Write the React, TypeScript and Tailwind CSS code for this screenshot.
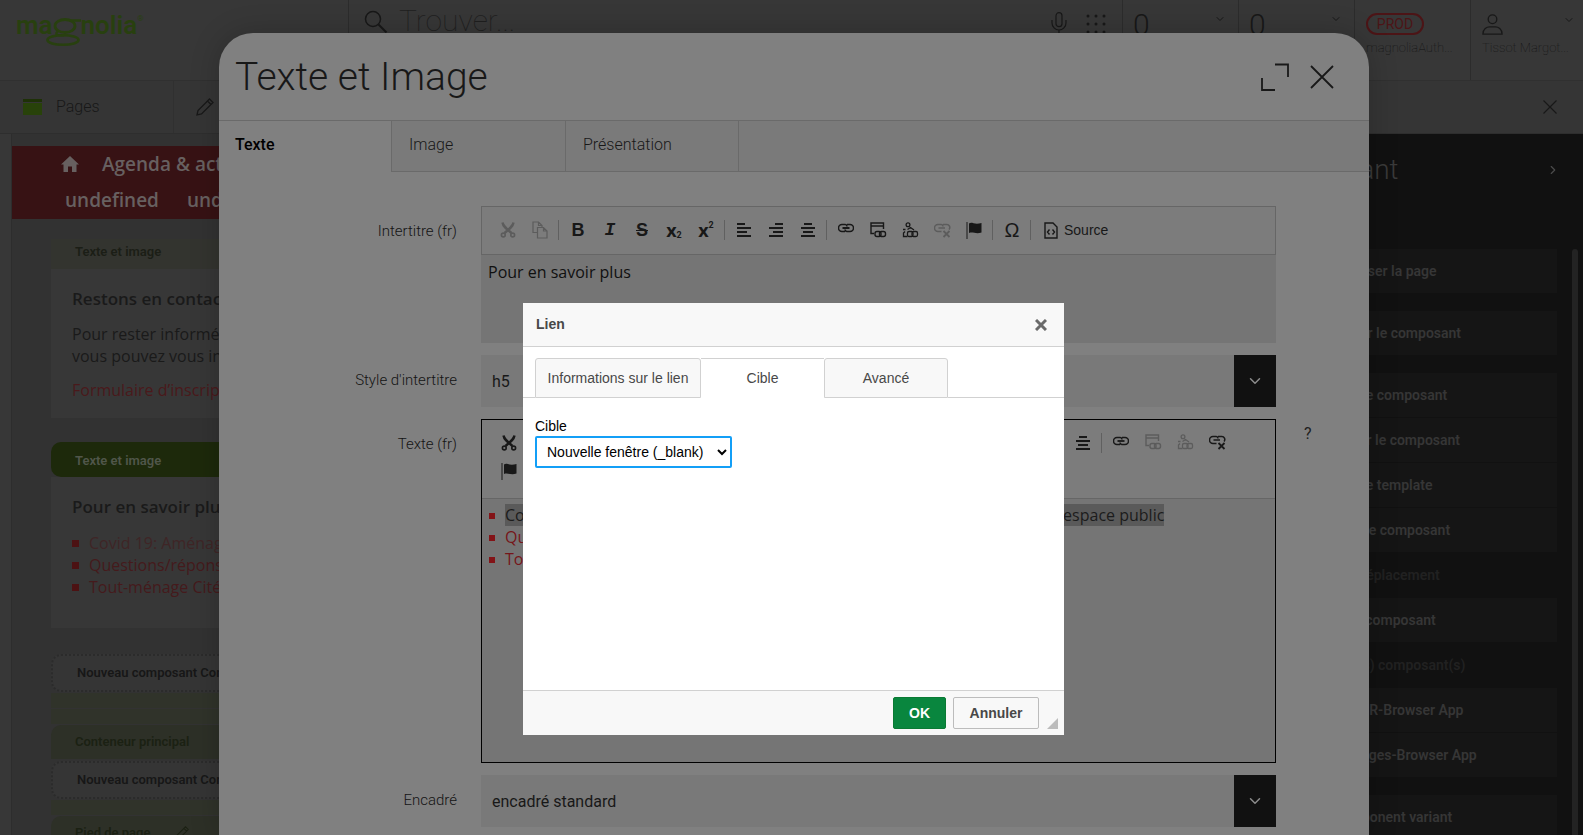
import { useState } from 'react';
import type { ReactNode } from 'react';
import {
  FiChevronDown,
  FiChevronRight,
  FiClipboard,
  FiCornerUpLeft,
  FiCornerUpRight,
  FiList,
} from 'react-icons/fi';

interface Action {
  label: string;
  disabled?: boolean;
}

interface IconProps {
  className?: string;
}

const actionGroups: Action[][] = [
  [{ label: 'Prévisualiser la page' }],
  [{ label: 'Configurer le composant' }],
  [
    { label: 'Modifier le composant' },
    { label: 'Supprimer le composant' },
    { label: 'Modifier le template' },
    { label: 'Déplacer le composant' },
    { label: 'Annuler déplacement', disabled: true },
    { label: 'Copier le composant' },
    { label: 'Coller (les) composant(s)', disabled: true },
    { label: 'Lancer JCR-Browser App' },
    { label: 'Lancer Pages-Browser App' },
  ],
  [{ label: 'Add component variant' }],
];

const pageLinks = [
  'Covid 19: Aménagements temporaires et adaptations de nos usages dans l’espace public',
  'Questions/réponses Covid-19',
  'Tout-ménage Cité de Neuchâtel',
];

function CutIcon({ className }: IconProps) {
  return (
    <svg viewBox="0 0 16 16" className={`h-4 w-4 ${className ?? ''}`} fill="none" stroke="currentColor">
      <path d="M2.5 0.5 C3 4 6 6.500 11.500 11 M13.500 0.500 C13 4 10 6.500 4.500 11" strokeWidth="2.400" />
      <circle cx="3.300" cy="13" r="1.900" strokeWidth="1.600" />
      <circle cx="12.700" cy="13" r="1.900" strokeWidth="1.600" />
    </svg>
  );
}

function CopyIcon({ className }: IconProps) {
  return (
    <svg viewBox="0 0 16 18" className={`h-[18px] w-4 ${className ?? ''}`} fill="none" stroke="currentColor" strokeWidth="1.2">
      <path d="M5 11.500 H1 V1 H6.500 L10 4.500 V6 M6.500 1 V4.500 H10" />
      <path d="M5.500 6.500 H11.500 L15 10 V17 H5.500 Z M11.500 6.500 V10 H15" />
    </svg>
  );
}

function AlignIcon({ kind }: { kind: 'left' | 'right' | 'center' }) {
  const rows = [8, 14, 10, 14];
  return (
    <svg viewBox="0 0 14 14" className="h-[14px] w-[14px]" fill="currentColor">
      {rows.map((w, i) => {
        const x = kind === 'left' ? 0 : kind === 'right' ? 14 - w : (14 - w) / 2;
        return <rect key={i} x={x} y={i * 4} width={w} height="2" />;
      })}
    </svg>
  );
}

function LinkIcon() {
  return (
    <svg viewBox="0 0 16 10" className="mb-1 h-[10px] w-4" fill="none" stroke="currentColor" strokeWidth="1.5">
      <path d="M7 8.500 H4 A3.200 3.200 0 0 1 4 1.500 H7.200 A2 2 0 0 1 9 3.500" />
      <path d="M9 1.500 H12 A3.200 3.200 0 0 1 12 8.500 H8.800 A2 2 0 0 1 7 6.500" />
      <path d="M4.500 5 H11.500" strokeWidth="1.800" />
    </svg>
  );
}

function PageLinkIcon({ className }: IconProps) {
  return (
    <svg viewBox="0 0 17 17" className={`h-[17px] w-[17px] ${className ?? ''}`} fill="none" stroke="currentColor" strokeWidth="1.400">
      <path d="M4 11.500 H1 V1 H13.500 V7 M1 4 H13.500" />
      <rect x="5" y="9.500" width="6" height="5" rx="2" />
      <rect x="9.500" y="9.500" width="6" height="5" rx="2" />
    </svg>
  );
}

function AssetLinkIcon({ className }: IconProps) {
  return (
    <svg viewBox="0 0 17 17" className={`h-[17px] w-[17px] ${className ?? ''}`} fill="none" stroke="currentColor" strokeWidth="1.300">
      <circle cx="6" cy="2.800" r="1.900" />
      <path d="M5.500 14.500 H1.500 V11 L3 9.500 M1 7.500 H3.500 M5.500 7.500 L8.500 5.500 L12 8" />
      <rect x="5.500" y="9.500" width="5.500" height="5" rx="1.500" />
      <rect x="10" y="9.500" width="5.500" height="5" rx="1.500" />
    </svg>
  );
}

function UnlinkIcon({ className }: IconProps) {
  return (
    <svg viewBox="0 0 17 15" className={`h-[15px] w-[17px] ${className ?? ''}`} fill="none" stroke="currentColor" strokeWidth="1.500">
      <path d="M7.500 8.500 H4 A3.200 3.200 0 0 1 4 1.500 H7.200 A2 2 0 0 1 9 3.500" />
      <path d="M9 1.500 H12.500 A3 3 0 0 1 15 6.500 M4.500 5 H11" />
      <path d="M9.500 8 L15.500 14 M15.500 8 L9.500 14" strokeWidth="1.800" />
    </svg>
  );
}

function FlagIcon() {
  return (
    <svg viewBox="0 0 16 17" className="h-[17px] w-4" fill="currentColor">
      <rect x="0.500" y="0" width="1" height="17" />
      <path d="M3 1.500 C6 -0.500 8 3 15.500 1 V10.500 C10 12.500 7 9.500 3 11 Z" />
    </svg>
  );
}

function PencilIcon({ className }: IconProps) {
  return (
    <svg viewBox="0 0 18 18" className={className} fill="none" stroke="currentColor" strokeWidth="1.300">
      <path d="M1 17 L2 12.500 L13.500 1 L17 4.500 L5.500 16 Z M11.500 3 L15 6.500" />
    </svg>
  );
}

function ToolButton({ title, disabled, children }: { title: string; disabled?: boolean; children: ReactNode }) {
  return (
    <button
      type="button"
      title={title}
      disabled={disabled}
      className={`flex h-[29px] w-8 items-center justify-center ${disabled ? 'text-[#5c5c5c]' : 'text-[#181818]'}`}
    >
      {children}
    </button>
  );
}

function Separator() {
  return <span className="ml-[2px] mr-[3px] h-5 w-px bg-[#606060]" />;
}

function StyleButtons() {
  return (
    <>
      <ToolButton title="Gras"><span className="font-['Liberation_Sans'] text-lg font-bold">B</span></ToolButton>
      <ToolButton title="Italique"><span className="font-['Liberation_Mono'] text-lg font-bold italic">I</span></ToolButton>
      <ToolButton title="Barré"><span className="font-['Liberation_Sans'] text-lg font-bold line-through">S</span></ToolButton>
      <ToolButton title="Indice">
        <span className="font-['Open_Sans'] text-lg font-bold leading-none">x</span>
        <span className="pt-3 text-[9px] font-bold">2</span>
      </ToolButton>
      <ToolButton title="Exposant">
        <span className="font-['Open_Sans'] text-lg font-bold leading-none">x</span>
        <span className="pb-2 text-[9px] font-bold">2</span>
      </ToolButton>
    </>
  );
}

function AlignButtons() {
  return (
    <>
      <ToolButton title="Aligner à gauche"><AlignIcon kind="left" /></ToolButton>
      <ToolButton title="Aligner à droite"><AlignIcon kind="right" /></ToolButton>
      <ToolButton title="Centrer"><AlignIcon kind="center" /></ToolButton>
    </>
  );
}

function SelectField({ id, value }: { id: string; value: string }) {
  return (
    <div className="flex h-[52px] bg-[#797979]">
      <select id={id} className="min-w-0 flex-1 appearance-none pl-[11px] pt-[2px] text-base text-[#181818] outline-none">
        <option>{value}</option>
      </select>
      <span className="flex w-[42px] items-center justify-center bg-[#111111] text-[#8c8c8c]">
        <FiChevronDown className="h-[18px] w-[18px]" />
      </span>
    </div>
  );
}

function FieldRow({ label, id, help, children }: { label: string; id: string; help?: boolean; children: ReactNode }) {
  return (
    <div className="flex">
      <label htmlFor={id} className="w-[238px] shrink-0 pt-[15px] text-right text-[15px] font-light leading-5 text-[#141414]">
        {label}
      </label>
      <div className="ml-6 min-w-0 flex-1">{children}</div>
      <div className="w-[93px] shrink-0 pl-7 pt-[5px] text-base leading-5 text-[#202020]">{help && '?'}</div>
    </div>
  );
}

function Header() {
  return (
    <header className="flex h-[81px] shrink-0 border-b border-[#303030] bg-[#373737] text-[#181818]">
      <div className="flex w-[348px] shrink-0 items-start pl-4 pt-[9px]">
        <a href="#home" aria-label="magnolia" className="flex text-[#28400f]">
          <span className="text-[26px] font-semibold leading-8">ma</span>
          <svg viewBox="0 0 36 30" className="-ml-2 mt-2 h-[30px] w-9 shrink-0" fill="none" stroke="currentColor">
            <ellipse cx="20" cy="9" rx="10" ry="6.500" strokeWidth="2.800" />
            <path d="M25 3.500 H36" strokeWidth="2.500" />
            <path d="M13 14.500 C9 17 12 18.500 19 18.500" strokeWidth="2.200" />
            <ellipse cx="18" cy="23" rx="15.500" ry="4.800" strokeWidth="2.600" />
          </svg>
          <span className="text-[26px] font-semibold leading-8">nolia</span>
          <span className="text-[8px] leading-5">®</span>
        </a>
      </div>
      <div className="flex flex-1 items-start border-l border-[#2c2c2c] pl-[15px]">
        <svg viewBox="0 0 24 24" className="mt-[10px] h-6 w-6 shrink-0" fill="none" stroke="currentColor" strokeWidth="1.500">
          <circle cx="9" cy="9" r="7.500" />
          <path d="M14.500 14.500 L22.500 22.500" strokeWidth="2" />
        </svg>
        <input
          aria-label="Trouver"
          placeholder="Trouver..."
          className="ml-[11px] min-w-0 flex-1 text-[30px] font-thin leading-[42px] outline-none placeholder:text-[#1f1f1f]"
        />
        <svg viewBox="0 0 16 24" className="mt-3 h-6 w-4 shrink-0" fill="none" stroke="currentColor" strokeWidth="1.200">
          <rect x="5" y="0.700" width="6" height="14" rx="3" />
          <path d="M1 8 V11 A7 7 0 0 0 15 11 V8 M8 18 V24" />
        </svg>
        <svg viewBox="0 0 20 20" className="ml-[19px] mr-4 mt-[14px] h-5 w-5 shrink-0" fill="currentColor">
          {[2, 10, 18].map((y) => [2, 10, 18].map((x) => <circle key={`${x}-${y}`} cx={x} cy={y} r="1.500" />))}
        </svg>
      </div>
      {['Tâches', 'Notifications'].map((name) => (
        <button key={name} title={name} type="button" className="flex w-[116px] shrink-0 items-start justify-between border-l border-[#2c2c2c] pl-[10px] pr-3">
          <span className="text-[30px] font-light leading-[50px]">0</span>
          <FiChevronDown className="mt-[13px] h-3 w-3" />
        </button>
      ))}
      <div className="flex w-[116px] shrink-0 flex-col items-start border-l border-[#2c2c2c] pl-[11px] pt-[13px]">
        <span className="flex h-[22px] w-[58px] items-center justify-center rounded-full border-2 border-[#4c1416] text-sm text-[#4c1416]">
          PROD
        </span>
        <span className="whitespace-nowrap pt-[3px] text-[13px] font-thin leading-5 text-[#111111]">magnoliaAuth...</span>
      </div>
      <div className="w-[113px] shrink-0 border-l border-[#2c2c2c] pl-[11px] pt-[14px]">
        <div className="flex items-start justify-between pr-2">
          <svg viewBox="0 0 22 22" className="h-[21px] w-[21px]" fill="none" stroke="currentColor" strokeWidth="1.400">
            <circle cx="11" cy="5.500" r="4.500" />
            <path d="M1 21 C1 15.500 5 13.500 8 13.500 H14 C17 13.500 21 15.500 21 21 Z" />
          </svg>
          <FiChevronDown className="h-3 w-3" />
        </div>
        <span className="block whitespace-nowrap pt-[3px] text-[13px] font-thin leading-5 text-[#111111]">Tissot Margot...</span>
      </div>
    </header>
  );
}

function AppTabs() {
  return (
    <nav className="flex h-[53px] shrink-0 items-center justify-between border-b border-[#2e2e2e] bg-[#353535] text-[#181818]">
      <div className="flex h-full">
        <a href="#pages" className="flex w-[174px] items-center border-r border-[#303030] pl-[23px] text-base font-light">
          <svg viewBox="0 0 19 16" className="mr-[14px] h-4 w-[19px]" fill="#28420a">
            <rect width="19" height="3" fill="#1e3107" />
            <rect y="4" width="19" height="12" />
          </svg>
          Pages
        </a>
        <a href="#edit" title="Page" className="flex w-[174px] items-center pl-[22px]">
          <PencilIcon className="h-[18px] w-[18px]" />
        </a>
      </div>
      <button type="button" title="Fermer" className="mr-[26px]">
        <svg viewBox="0 0 14 14" className="h-[14px] w-[14px]" stroke="currentColor" strokeWidth="1.200">
          <path d="M0.500 0.500 L13.500 13.500 M13.500 0.500 L0.500 13.500" />
        </svg>
      </button>
    </nav>
  );
}

function ComponentBar({ children }: { children: ReactNode }) {
  return (
    <div className="mt-[2px] flex h-[38px] items-center rounded-[10px] border-2 border-dotted border-[#2b2b2b] bg-[#353535] pl-6 text-[#171717]">
      {children}
    </div>
  );
}

function PagePreview() {
  return (
    <main className="min-w-0 flex-1 overflow-hidden whitespace-nowrap border-l border-[#2d2d2d] bg-[#323232] pt-3">
      <nav className="flex h-[73px] flex-col bg-[#371214] font-['Open_Sans'] text-[19px] font-semibold leading-9 text-[#676060]">
        <div className="flex items-center pl-[49px]">
          <svg viewBox="0 0 18 16" className="h-4 w-[18px]" fill="currentColor">
            <path d="M9 0 L18 8.500 H15.500 V16 H11 V10.500 H7 V16 H2.500 V8.500 H0 Z" />
          </svg>
          <a href="#agenda" className="ml-[23px]">Agenda &amp; actualités</a>
        </div>
        <div className="flex gap-7 pl-[53px]">
          <a href="#u1">undefined</a>
          <a href="#u2">undefined</a>
        </div>
      </nav>
      <div className="ml-[39px] mt-5">
        <div className="flex h-[30px] items-center bg-[#33342f] pb-1 pl-6 text-[13px] font-semibold text-[#1b1e16]">Texte et image</div>
        <section className="h-[149px] bg-[#373737] pl-[21px] pt-[18px] font-['Open_Sans'] text-base leading-[22px] text-[#1a1a1a]">
          <h2 className="text-[17px] font-semibold leading-6">Restons en contact !</h2>
          <p className="mt-3">
            Pour rester informés des activités,<br />
            vous pouvez vous inscrire
          </p>
          <p className="mt-3 text-[#4a191b]">
            <a href="#form">Formulaire d’inscription</a>
          </p>
        </section>
        <div className="mt-6 flex h-[35px] items-center rounded-t-[10px] rounded-bl-[10px] bg-[#1d290b] pl-6 pt-[2px] text-[13px] font-semibold text-[#50564a]">
          Texte et image
        </div>
        <section className="h-[151px] bg-[#373737] pl-[21px] pt-[18px] font-['Open_Sans'] text-base leading-[22px] text-[#1a1a1a]">
          <h2 className="text-[17px] font-semibold leading-6">Pour en savoir plus</h2>
          <ul className="mt-[13px]">
            {pageLinks.map((link, i) => (
              <li key={link} className="flex items-center">
                <span className="mr-[10px] h-[7px] w-[7px] shrink-0 bg-[#4c1213]" />
                <a href="#link" className={i === 0 ? 'text-[#3f2526]' : 'text-[#451a1c]'}>{link}</a>
              </li>
            ))}
          </ul>
        </section>
        <div className="mt-[26px] text-[13px] font-semibold">
          <ComponentBar>Nouveau composant Contenu</ComponentBar>
          <div className="mt-px h-[15px] bg-[#30332a]" />
          <div className="mt-px h-[15px] bg-[#30332a]" />
          <div className="mt-px flex h-[34px] items-center rounded-tl-[10px] bg-[#2d3027] pl-6 text-[#1b2113]">Conteneur principal</div>
          <ComponentBar>Nouveau composant Conteneur</ComponentBar>
          <div className="mt-px h-[15px] bg-[#30332a]" />
          <div className="mt-px flex h-[34px] items-center rounded-tl-[10px] bg-[#2d3027] pl-6 text-[#1b2113]">
            Pied de page
            <PencilIcon className="ml-6 h-[14px] w-[14px]" />
          </div>
        </div>
      </div>
    </main>
  );
}

function ActionPanel() {
  return (
    <aside className="flex w-[342px] shrink-0 flex-col overflow-hidden bg-[#111111] text-[#3a3a3a]">
      <div className="flex h-[72px] shrink-0 items-center justify-between pl-[14px] pr-[23px]">
        <h2 className="text-[28px] font-light">Composant</h2>
        <FiChevronRight className="h-[18px] w-[14px] text-[#4c4c4c]" />
      </div>
      <div className="mt-[43px] flex min-h-0 flex-1">
        <div className="flex flex-1 flex-col gap-[18px]">
          {actionGroups.map((group, i) => (
            <div key={i} className="flex flex-col gap-px">
              {group.map((action) => (
                <button
                  key={action.label}
                  type="button"
                  disabled={action.disabled}
                  className={`h-11 shrink-0 pl-[65px] text-left text-sm font-semibold ${
                    action.disabled ? 'text-[#212121]' : 'bg-[#151515] text-[#363636]'
                  }`}
                >
                  {action.label}
                </button>
              ))}
            </div>
          ))}
        </div>
        <div className="ml-[15px] mr-[5px] w-[6px] rounded-t-full bg-[#232323]" />
      </div>
    </aside>
  );
}

function TextDialog() {
  return (
    <section
      role="dialog"
      aria-label="Texte et Image"
      className="flex min-w-0 flex-1 flex-col overflow-hidden rounded-t-[34px] bg-[#808080] shadow-[0_0_30px_rgba(0,0,0,0.2)]"
    >
      <div className="flex h-[88px] shrink-0 items-center justify-between border-b border-[#6a6a6a] pl-4 pr-[35px] text-[#181818]">
        <h1 className="pt-[2px] text-[39px] font-light">Texte et Image</h1>
        <div className="flex items-center gap-[21px]">
          <button type="button" title="Agrandir">
            <svg viewBox="0 0 28 28" className="h-7 w-7" fill="none" stroke="currentColor" strokeWidth="1.800">
              <path d="M14 1.500 H27 V14 M1 15 V27 H14" />
            </svg>
          </button>
          <button type="button" title="Fermer">
            <svg viewBox="0 0 24 24" className="h-6 w-6" stroke="currentColor" strokeWidth="1.800">
              <path d="M1 1 L23 23 M23 1 L1 23" />
            </svg>
          </button>
        </div>
      </div>

      {/* Tabs */}
      <div role="tablist" className="flex h-[51px] shrink-0 text-base text-[#181818]">
        <button role="tab" aria-selected="true" className="w-[172px] pb-[3px] pl-4 text-left font-medium text-black">Texte</button>
        <button role="tab" className="w-[174px] border-b border-l border-[#6a6a6a] bg-[#7a7a7a] pb-[2px] pl-[17px] text-left font-light">Image</button>
        <button role="tab" className="w-[174px] border-x border-b border-[#6a6a6a] bg-[#7a7a7a] pb-[2px] pl-[17px] text-left font-light">Présentation</button>
        <div className="flex-1 border-b border-[#6a6a6a] bg-[#7a7a7a]" />
      </div>

      {/* Form */}
      <div className="flex flex-col gap-3 pt-[34px]">
        <FieldRow label="Intertitre (fr)" id="intertitre">
          <div className="h-[137px] bg-[#757575]">
            <div className="flex h-[49px] items-center border border-[#666666] bg-[#7c7c7c] pb-px pl-[10px]">
              <ToolButton title="Couper" disabled><CutIcon /></ToolButton>
              <ToolButton title="Copier" disabled><CopyIcon /></ToolButton>
              <Separator />
              <StyleButtons />
              <Separator />
              <AlignButtons />
              <Separator />
              <ToolButton title="Lien"><LinkIcon /></ToolButton>
              <ToolButton title="Lien vers une page"><PageLinkIcon /></ToolButton>
              <ToolButton title="Lien vers un asset"><AssetLinkIcon /></ToolButton>
              <ToolButton title="Supprimer le lien" disabled><UnlinkIcon /></ToolButton>
              <ToolButton title="Ancre"><FlagIcon /></ToolButton>
              <Separator />
              <ToolButton title="Caractère spécial"><span className="font-['Liberation_Sans'] text-xl">Ω</span></ToolButton>
              <Separator />
              <button type="button" className="flex items-center gap-[6px] pl-[10px] font-['Liberation_Sans'] text-sm text-[#181818]">
                <svg viewBox="0 0 14 17" className="h-[17px] w-[14px]" fill="none" stroke="currentColor" strokeWidth="1.400">
                  <path d="M1 1 H9 L13 5 V16 H1 Z M5.500 7.500 L3.500 10 L5.500 12.500 M8.500 7.500 L10.500 10 L8.500 12.500" />
                </svg>
                Source
              </button>
            </div>
            <div id="intertitre" role="textbox" className="px-[7px] pt-[6px] font-['Open_Sans'] text-base leading-[22px] text-[#101010]">
              Pour en savoir plus
            </div>
          </div>
        </FieldRow>

        <FieldRow label="Style d'intertitre" id="style">
          <SelectField id="style" value="h5" />
        </FieldRow>

        <FieldRow label="Texte (fr)" id="texte" help>
          <div className="h-[344px] border border-black bg-[#757575]">
            <div className="h-[79px] border-b border-[#666666] bg-[#7c7c7c] pl-[11px] pt-2">
              <div className="flex items-center">
                <ToolButton title="Couper"><CutIcon /></ToolButton>
                <ToolButton title="Copier"><CopyIcon /></ToolButton>
                <ToolButton title="Coller"><FiClipboard /></ToolButton>
                <ToolButton title="Coller comme texte"><FiClipboard /></ToolButton>
                <ToolButton title="Coller depuis Word"><FiClipboard /></ToolButton>
                <Separator />
                <ToolButton title="Annuler"><FiCornerUpLeft /></ToolButton>
                <ToolButton title="Rétablir"><FiCornerUpRight /></ToolButton>
                <Separator />
                <StyleButtons />
                <Separator />
                <ToolButton title="Liste numérotée"><FiList /></ToolButton>
                <ToolButton title="Liste à puces"><FiList /></ToolButton>
                <Separator />
                <ToolButton title="Citation"><FiList /></ToolButton>
                <Separator />
                <AlignButtons />
                <Separator />
                <ToolButton title="Lien"><LinkIcon /></ToolButton>
                <ToolButton title="Lien vers une page" disabled><PageLinkIcon /></ToolButton>
                <ToolButton title="Lien vers un asset" disabled><AssetLinkIcon /></ToolButton>
                <ToolButton title="Supprimer le lien"><UnlinkIcon /></ToolButton>
              </div>
              <ToolButton title="Ancre"><FlagIcon /></ToolButton>
            </div>
            <ul id="texte" className="overflow-hidden whitespace-nowrap pl-[7px] pt-[5px] font-['Open_Sans'] text-base leading-[22px]">
              {pageLinks.map((link, i) => (
                <li key={link} className="flex items-center">
                  <span className="mr-[10px] mt-[2px] h-[6px] w-[6px] shrink-0 bg-[#831317]" />
                  <a href="#link" className={i === 0 ? 'bg-[#5a5a5a] text-[#1c1c1c]' : 'text-[#75161a]'}>{link}</a>
                </li>
              ))}
            </ul>
          </div>
        </FieldRow>

        <FieldRow label="Encadré" id="encadre">
          <SelectField id="encadre" value="encadré standard" />
        </FieldRow>
      </div>
    </section>
  );
}

function LinkDialog() {
  const [target, setTarget] = useState('_blank');

  return (
    <section role="dialog" aria-label="Lien" className="flex h-[432px] w-[541px] flex-col bg-white font-['Liberation_Sans'] text-sm text-[#484848]">
      <div className="flex h-11 shrink-0 items-center justify-between border-b border-[#d1d1d1] bg-[#f8f8f8] pl-[13px] pr-[17px]">
        <h2 className="pb-[2px] font-bold">Lien</h2>
        <button type="button" title="Fermer" className="text-[#6a6a6a]">
          <svg viewBox="0 0 12 12" className="h-3 w-3" stroke="currentColor" strokeWidth="3">
            <path d="M1 1 L11 11 M11 1 L1 11" />
          </svg>
        </button>
      </div>
      <div role="tablist" className="flex h-[51px] shrink-0 pt-[11px]">
        <span className="w-3 border-b border-[#d1d1d1]" />
        <button role="tab" className="w-[166px] rounded-t-[3px] border border-[#d1d1d1] bg-[#f8f8f8]">Informations sur le lien</button>
        <button role="tab" aria-selected="true" className="w-[123px] border-t border-[#d1d1d1] pb-px">Cible</button>
        <button role="tab" className="w-[124px] rounded-t-[3px] border border-[#d1d1d1] bg-[#f8f8f8]">Avancé</button>
        <span className="flex-1 border-b border-[#d1d1d1]" />
      </div>
      <div className="flex flex-1 flex-col items-start px-3 pt-[18px] text-black">
        <label htmlFor="target" className="leading-5">Cible</label>
        <select
          id="target"
          value={target}
          onChange={(e) => setTarget(e.target.value)}
          className="h-8 w-[197px] rounded-[2px] border-2 border-[#139ff7] bg-white pl-[6px] outline-none"
        >
          <option value="">&lt;indéfini&gt;</option>
          <option value="_blank">Nouvelle fenêtre (_blank)</option>
          <option value="_self">Même fenêtre (_self)</option>
        </select>
      </div>
      <div className="flex h-[45px] shrink-0 items-center justify-end border-t border-[#d1d1d1] bg-[#f8f8f8] pr-[6px] text-sm font-bold">
        <button type="button" className="h-8 w-[53px] rounded-[2px] border border-[#0a7a33] bg-[#09863e] text-white">OK</button>
        <button type="button" className="ml-[7px] h-8 w-[86px] rounded-[2px] border border-[#bcbcbc] bg-[#f8f8f8] text-[#484848]">Annuler</button>
        <svg viewBox="0 0 11 11" className="ml-2 mt-5 h-[11px] w-[11px]" fill="#bcbcbc">
          <path d="M11 0 V11 H0 Z" />
        </svg>
      </div>
    </section>
  );
}

export default function App() {
  return (
    <div className="relative h-screen overflow-hidden bg-[#373737] font-[Roboto,sans-serif]">
      <div className="flex h-full flex-col">
        <Header />
        <AppTabs />
        <div className="flex min-h-0 flex-1 pl-[11px]">
          <PagePreview />
          <ActionPanel />
        </div>
      </div>

      {/* Component dialog */}
      <div className="absolute inset-0 flex pl-[219px] pr-[214px] pt-[33px]">
        <TextDialog />
      </div>

      {/* Link dialog */}
      <div className="absolute inset-0 flex items-start justify-center pl-1 pt-[303px]">
        <LinkDialog />
      </div>
    </div>
  );
}
